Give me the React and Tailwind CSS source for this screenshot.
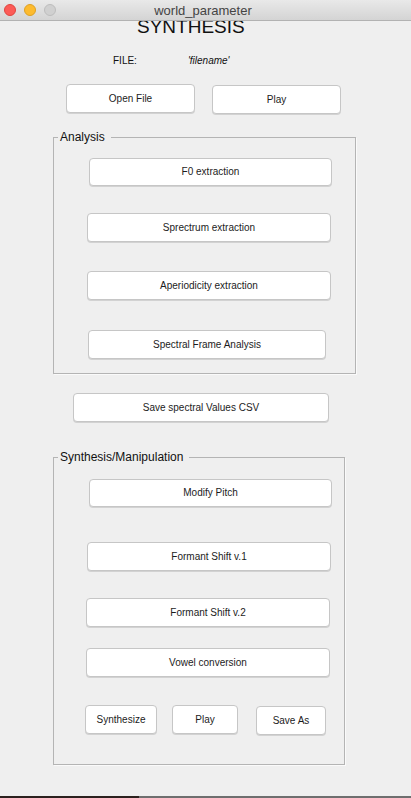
import React from 'react'

const Btn = ({ label, className = '' }) => (
  <div
    className={`flex items-center justify-center bg-white border border-[#c6c6c6] rounded-[4px] shadow-[0_1px_0_rgba(0,0,0,0.12)] text-[10px] text-[#1c1c1c] leading-none ${className}`}
  >
    {label}
  </div>
)

const Panel = ({ title, className = '', children }) => (
  <div className={`relative border border-[#b4b4b4] shadow-[1px_1px_0_#fafafa] ${className}`}>
    <div className="absolute -top-[8px] left-[4px] pl-[2px] pr-[6px] bg-[#efefef] text-[12px] leading-[14px] text-[#111]">
      {title}
    </div>
    {children}
  </div>
)

const App = () => {
  return (
    <div
      className="relative w-[411px] h-[798px] bg-[#efefef] overflow-hidden"
      style={{ fontFamily: '"Liberation Sans", Arial, sans-serif' }}
    >
      {/* Title bar */}
      <div className="relative z-10 h-[21px] bg-gradient-to-b from-[#e9e9e9] to-[#d4d4d4] border-b border-[#b2b2b2] flex items-center">
        <div className="flex items-center gap-[8px] pl-[4px]">
          <span className="w-[12px] h-[12px] rounded-full bg-[#fc5b57] border border-[#e0443e]" />
          <span className="w-[12px] h-[12px] rounded-full bg-[#fdbb2f] border border-[#dea123]" />
          <span className="w-[12px] h-[12px] rounded-full bg-[#d0d0d0] border border-[#bdbdbd]" />
        </div>
        <div className="absolute inset-0 flex items-center justify-center pr-[5px] text-[13px] text-[#444] leading-none">
          world_parameter
        </div>
      </div>

      {/* Content */}
      <div className="-mt-[4px] h-[19px] pl-[137px] text-[19px] leading-[19px] text-[#111]">SYNTHESIS</div>

      <div className="mt-[19px] h-[12px] flex text-[10px] leading-[12px] text-[#111]">
        <span className="ml-[113px]">FILE:</span>
        <span className="ml-[51px] italic">'filename'</span>
      </div>

      <div className="mt-[17px] flex items-start">
        <Btn label="Open File" className="ml-[66px] w-[129px] h-[29px]" />
        <Btn label="Play" className="ml-[17px] mt-[1px] w-[129px] h-[29px]" />
      </div>

      <Panel title="Analysis" className="ml-[53px] mt-[23px] w-[303px] h-[237px]">
        <Btn label="F0 extraction" className="ml-[35px] mt-[20px] w-[243px] h-[28px]" />
        <Btn label="Sprectrum extraction" className="ml-[33px] mt-[27px] w-[244px] h-[29px]" />
        <Btn label="Aperiodicity extraction" className="ml-[33px] mt-[29px] w-[244px] h-[29px]" />
        <Btn label="Spectral Frame Analysis" className="ml-[34px] mt-[30px] w-[238px] h-[29px]" />
      </Panel>

      <Btn label="Save spectral Values CSV" className="ml-[73px] mt-[19px] w-[256px] h-[29px]" />

      <Panel title="Synthesis/Manipulation" className="ml-[53px] mt-[35px] w-[292px] h-[308px]">
        <Btn label="Modify Pitch" className="ml-[35px] mt-[21px] w-[243px] h-[28px]" />
        <Btn label="Formant Shift v.1" className="ml-[33px] mt-[35px] w-[244px] h-[29px]" />
        <Btn label="Formant Shift v.2" className="ml-[32px] mt-[27px] w-[244px] h-[29px]" />
        <Btn label="Vowel conversion" className="ml-[32px] mt-[21px] w-[244px] h-[29px]" />
        <div className="mt-[28px] flex items-start">
          <Btn label="Synthesize" className="ml-[31px] w-[72px] h-[29px]" />
          <Btn label="Play" className="ml-[15px] w-[66px] h-[29px]" />
          <Btn label="Save As" className="ml-[18px] mt-[1px] w-[70px] h-[29px]" />
        </div>
      </Panel>

      {/* desktop edge below the window */}
      <div className="absolute bottom-0 left-0 right-0 h-[2px] flex">
        <div className="w-[139px] bg-[#2b211e]" />
        <div className="flex-1 bg-[#6e6e6e]" />
      </div>
    </div>
  )
}

export default App
